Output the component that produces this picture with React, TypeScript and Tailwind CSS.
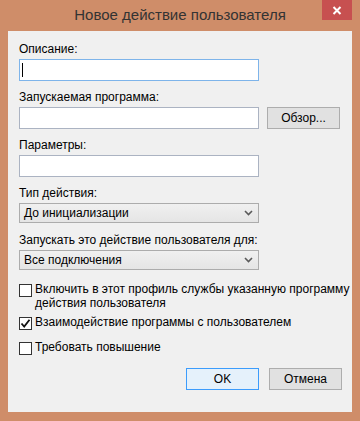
import React from "react";

const FONT = { fontFamily: '"Liberation Sans", Arial, sans-serif' };

const Label: React.FC<{ children: React.ReactNode; className?: string }> = ({ children, className }) => (
    <div className={"text-[12px] leading-[15px] text-black " + (className || "")}>{children}</div>
);

const TextBox: React.FC<{ focused?: boolean; caret?: boolean }> = ({ focused, caret }) => (
    <div
        className={
            "relative w-[240px] h-[22px] bg-white border " +
            (focused ? "border-[#7eb4ea]" : "border-[#abb3c2]")
        }
    >
        {caret && <div className="absolute left-[2px] top-[3px] w-px h-[14px] bg-black" />}
    </div>
);

const Combo: React.FC<{ value: string }> = ({ value }) => (
    <div className="flex flex-row items-center justify-between w-[240px] h-[20px] border border-[#acacac] bg-gradient-to-b from-[#f0f0f0] to-[#e5e5e5] pl-[4px] pr-[4px]">
        <span className="text-[12px] leading-[15px] text-black">{value}</span>
        <svg width="9" height="6" viewBox="0 0 9 6" className="mr-[1px]">
            <path d="M1 1 L4.5 4.5 L8 1" fill="none" stroke="#5a5a5a" strokeWidth="1.6" />
        </svg>
    </div>
);

const CheckBox: React.FC<{ checked?: boolean; children: React.ReactNode; className?: string }> = ({ checked, children, className }) => (
    <div className={"flex flex-row items-start " + (className || "")}>
        <div className="flex items-center justify-center w-[13px] h-[13px] mt-[2px] border border-[#333333] bg-white shrink-0">
            {checked && (
                <svg width="11" height="11" viewBox="0 0 11 11">
                    <path d="M1.5 5.5 L4.2 8.5 L9.5 1.8" fill="none" stroke="#111" strokeWidth="1.8" />
                </svg>
            )}
        </div>
        <div className="ml-[3px] w-[318px] shrink-0 text-[12px] leading-[14px] text-black">{children}</div>
    </div>
);

const Button: React.FC<{ children: React.ReactNode; primary?: boolean }> = ({ children, primary }) => (
    <div
        className={
            "flex items-center justify-center w-[73px] h-[22px] bg-[#e1e1e1] border text-[12px] text-black " +
            (primary ? "border-[#3c9cfc] bg-[#e5f1fb]" : "border-[#adadad]")
        }
    >
        {children}
    </div>
);

const App: React.FC = () => {
    return (
        <div className="w-[360px] h-[421px] bg-[#cf8d69] flex flex-col overflow-hidden" style={FONT}>
            {/* title bar */}
            <div className="relative h-[31px] flex items-center justify-center shrink-0">
                <span className="text-[15px] leading-[18px] text-[#333333] -mt-[2px]">Новое действие пользователя</span>
                <div className="absolute top-0 right-[8px] w-[30px] h-[20px] bg-[#c75050] flex items-center justify-center">
                    <svg width="10" height="9" viewBox="0 0 10 9">
                        <path d="M1.5 1 L8.5 8 M8.5 1 L1.5 8" stroke="#ffffff" strokeWidth="2" />
                    </svg>
                </div>
            </div>

            {/* client area */}
            <div className="flex-1 mx-[8px] mb-[9px] bg-[#f0f0f0] flex flex-col pl-[11px] pr-[10px] pt-[11px]">
                <Label className="mb-[2px]">Описание:</Label>
                <TextBox focused caret />

                <Label className="mt-[9px] mb-[2px]">Запускаемая программа:</Label>
                <div className="flex flex-row items-center gap-[8px]">
                    <TextBox />
                    <Button>Обзор...</Button>
                </div>

                <Label className="mt-[9px] mb-[2px]">Параметры:</Label>
                <TextBox />

                <Label className="mt-[9px] mb-[2px]">Тип действия:</Label>
                <Combo value="До инициализации" />

                <Label className="mt-[10px] mb-[2px]">Запускать это действие пользователя для:</Label>
                <Combo value="Все подключения" />

                <CheckBox className="mt-[12px]">
                    Включить в этот профиль службы указанную программу действия пользователя
                </CheckBox>
                <CheckBox checked className="mt-[5px]">
                    Взаимодействие программы с пользователем
                </CheckBox>
                <CheckBox className="mt-[10px]">Требовать повышение</CheckBox>

                <div className="flex flex-row justify-end gap-[10px] mt-[13px]">
                    <Button primary>OK</Button>
                    <Button>Отмена</Button>
                </div>
            </div>
        </div>
    );
};

export default App;
